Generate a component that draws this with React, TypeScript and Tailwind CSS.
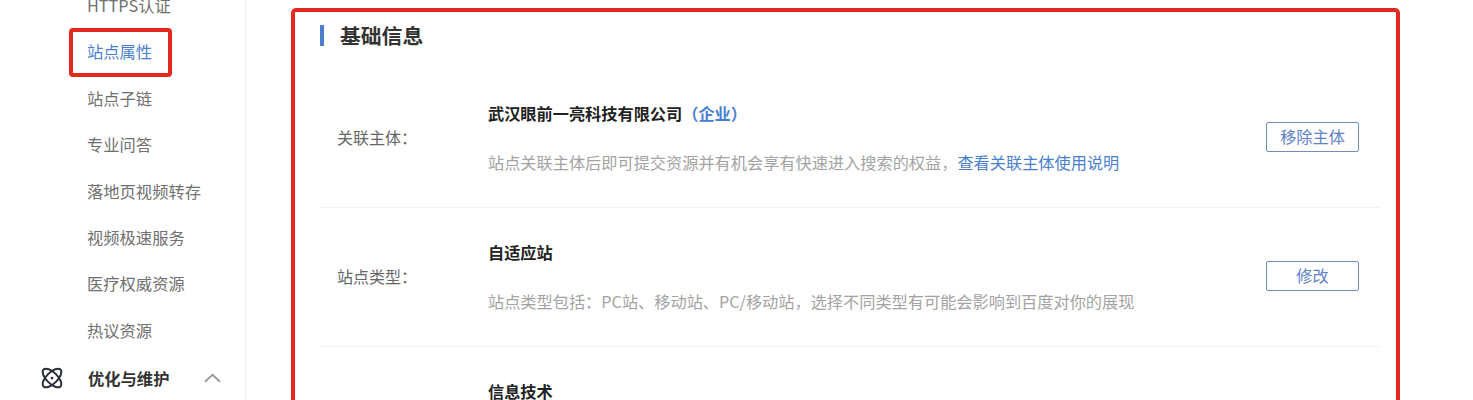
import React from "react";

const items = ["HTTPS认证", "站点属性", "站点子链", "专业问答", "落地页视频转存", "视频极速服务", "医疗权威资源", "热议资源"];

function Row({ label, title, extra, desc, link, btn }: { label: string; title: string; extra?: string; desc?: string; link?: string; btn: string }) {
  return (
    <div className="flex h-[139px] shrink-0 items-center border-b border-[#f2f3f5] pb-[3px] pr-[21px]">
      <div className="w-[168px] pl-[17px] text-[16px] text-[#666666]">{label}</div>
      <div className="flex-1 pt-[2px]">
        <div className="text-[16.2px] font-bold leading-[24px] text-[#222222]">
          {title}
          {extra && <span className="text-[#4a7fd0]">{extra}</span>}
        </div>
        <div className="mt-[25px] h-[24px] text-[16.2px] leading-[24px] text-[#a3a3a3]">
          {desc}
          {link && <span className="text-[#4a7fd0]">{link}</span>}
        </div>
      </div>
      <button className="flex h-[30px] w-[93px] items-center justify-center rounded-[2px] border border-[#6f8fc0] text-[16.2px] text-[#5f82c8]">
        {btn}
      </button>
    </div>
  );
}

export default function App() {
  return (
    <div className="flex h-[400px] w-[1473px] overflow-hidden bg-white font-['Noto_Sans_CJK_SC','Noto_Sans',sans-serif]">
      <aside className="w-[246px] shrink-0 border-r border-[#eceef1]">
        <div className="mt-[-18px]">
          {items.map((t, i) => (
            <div key={t} className={`relative flex h-[46.4px] items-center pl-[87px] text-[16.3px] ${i === 1 ? "text-[#4a7fd0]" : "text-[#707070]"}`}>
              {t}
              {i === 1 && <span className="absolute left-[69px] top-[0px] h-[49px] w-[103px] rounded-[4px] border-[4px] border-[#e1291e]" />}
            </div>
          ))}
          <div className="mt-[1.500px] flex h-[46.4px] items-center pl-[41px]">
            <svg viewBox="0 0 24 24" className="mr-[25px] h-[22px] w-[22px]" fill="none" stroke="#2b2f36" strokeWidth="2.2">
              <ellipse cx="12" cy="12" rx="13" ry="6" transform="rotate(45 12 12)" />
              <ellipse cx="12" cy="12" rx="13" ry="6" transform="rotate(-45 12 12)" />
              <circle cx="12" cy="12" r="1.500" fill="#2b2f36" stroke="none" />
            </svg>
            <span className="text-[16.3px] font-bold text-[#333333]">优化与维护</span>
            <svg viewBox="0 0 18 10" className="ml-[35px] h-[10px] w-[17px]" fill="none" stroke="#9a9a9a" strokeWidth="2">
              <path d="M1 9 9 1.500 17 9" />
            </svg>
          </div>
        </div>
      </aside>
      <main className="min-w-0 flex-1 pl-[45px] pt-[8px]">
        <section className="h-[420px] w-[1109px] rounded-[5px] border-[4px] border-[#e1291e] pl-[25px] pr-[16px]">
          <div className="mb-[10px] flex h-[47px] items-center">
            <span className="mr-[16px] h-[21px] w-[4px] bg-[#4a7fd0]" />
            <h2 className="text-[20.8px] font-bold leading-none text-[#333333]">基础信息</h2>
          </div>
          <Row
            label="关联主体："
            title="武汉眼前一亮科技有限公司"
            extra="（企业）"
            desc="站点关联主体后即可提交资源并有机会享有快速进入搜索的权益，"
            link="查看关联主体使用说明"
            btn="移除主体"
          />
          <Row
            label="站点类型："
            title="自适应站"
            desc="站点类型包括：PC站、移动站、PC/移动站，选择不同类型有可能会影响到百度对你的展现"
            btn="修改"
          />
          <Row label="" title="信息技术" btn="修改" />
        </section>
      </main>
    </div>
  );
}
